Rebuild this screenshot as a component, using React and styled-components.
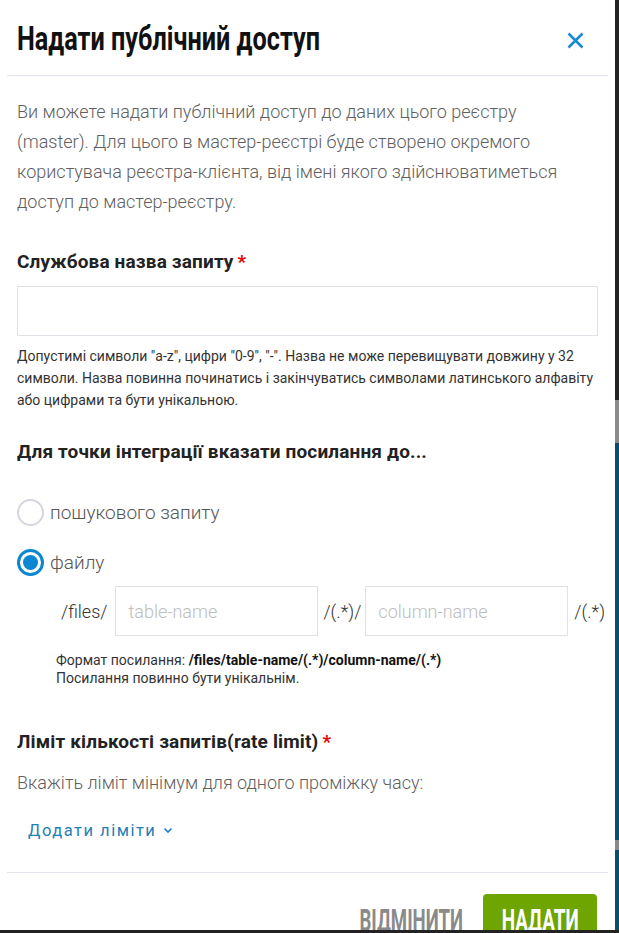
import React from "react";
import styled, { createGlobalStyle } from "styled-components";

const Global = createGlobalStyle`
  html, body {
    margin: 0;
    padding: 0;
    height: 933px;
    overflow: hidden;
  }
  body {
    background: linear-gradient(
      to bottom,
      #232323 0px,
      #232323 400px,
      #8a8a8a 400px,
      #8a8a8a 443px,
      #0b4d6c 443px,
      #0b4d6c 840px,
      #8a8a8a 840px,
      #8a8a8a 850px,
      #0b4d6c 850px,
      #0b4d6c 930px,
      #222 930px
    );
    font-family: Roboto, "Noto Sans", sans-serif;
  }
`;

const Modal = styled.div`
  width: 615px;
  height: 930px;
  background: #fff;
  overflow: hidden;
  display: flex;
  flex-direction: column;
`;

const Header = styled.header`
  margin: 0 7px;
  padding: 0 10px;
  height: 76px;
  box-sizing: border-box;
  border-bottom: 1px solid #e2e2ea;
  display: flex;
  align-items: center;
  justify-content: space-between;
  flex-shrink: 0;
`;

const Condensed = styled.span`
  display: inline-block;
  font-family: Roboto, "Noto Sans", sans-serif;
  font-weight: 700;
  transform: scaleX(${(p) => p.$sx || 0.765});
  transform-origin: ${(p) => p.$origin || "left"} center;
  white-space: nowrap;
`;

const Title = styled.h1`
  margin: 0;
  font-size: 33px;
  line-height: 38px;
  color: #111;
  font-weight: 700;
  padding-top: 3px;
`;

const CloseButton = styled.button`
  border: 0;
  background: none;
  padding: 0;
  margin: 6px 13px 0 0;
  width: 20px;
  height: 20px;
  display: flex;
  align-items: center;
  justify-content: center;
  cursor: pointer;
`;

const Body = styled.div`
  padding: 21px 17px 0;
  display: flex;
  flex-direction: column;
`;

const Intro = styled.p`
  margin: 0;
  max-width: 562px;
  font-size: 18px;
  line-height: 30px;
  font-weight: 300;
  color: #606060;
`;

const Label = styled.div`
  margin-top: ${(p) => p.$mt}px;
  font-size: 19px;
  line-height: 24px;
  font-weight: 700;
  letter-spacing: 0.15px;
  color: #222;
`;

const Req = styled.span`
  color: #e30000;
  margin-left: 4px;
`;

const TextInput = styled.input`
  display: block;
  box-sizing: border-box;
  width: ${(p) => p.$w || "100%"};
  height: 50px;
  border: 1px solid #e0e0e7;
  border-radius: 0;
  padding: 0 12px;
  font-family: Roboto, "Noto Sans", sans-serif;
  font-size: 18px;
  font-weight: 300;
  color: #333;
  outline: none;
  &::placeholder {
    color: #bdbdbd;
  }
`;

const NameInput = styled(TextInput)`
  margin-top: 12px;
  width: 581px;
`;

const Help = styled.div`
  margin-top: ${(p) => p.$mt}px;
  padding-left: ${(p) => p.$pl || 0}px;
  font-size: 14px;
  line-height: ${(p) => p.$lh || 22}px;
  color: #333;
  b {
    font-weight: 700;
    color: #111;
  }
`;

const RadioGroup = styled.div`
  margin-top: 33px;
  display: flex;
  flex-direction: column;
  gap: 20px;
`;

const RadioRow = styled.label`
  display: flex;
  align-items: center;
  gap: 6px;
  height: 30px;
  font-size: 19px;
  font-weight: 300;
  color: #555;
  cursor: pointer;
`;

const RadioCircle = styled.span`
  box-sizing: border-box;
  width: 27px;
  height: 27px;
  border-radius: 50%;
  border: ${(p) => (p.$on ? "3px solid #0a87d0" : "2px solid #d3d6e0")};
  display: flex;
  align-items: center;
  justify-content: center;
  &::after {
    content: "";
    display: ${(p) => (p.$on ? "block" : "none")};
    width: 15px;
    height: 15px;
    border-radius: 50%;
    background: #0a87d0;
  }
`;

const PathRow = styled.div`
  margin-top: 9px;
  padding-left: 44px;
  display: flex;
  align-items: center;
  font-size: 18px;
  font-weight: 300;
  color: #333;
`;

const Seg = styled.span`
  margin: 0 ${(p) => p.$mr || 0}px 0 ${(p) => p.$ml || 0}px;
`;

const Hint = styled.div`
  margin-top: 16px;
  font-size: 18px;
  line-height: 26px;
  font-weight: 300;
  color: #606060;
`;

const AddLink = styled.button`
  margin-top: 22px;
  align-self: flex-start;
  border: 0;
  background: none;
  padding: 0 0 0 11px;
  height: 24px;
  display: flex;
  align-items: center;
  gap: 7px;
  font-family: Roboto, "Noto Sans", sans-serif;
  font-size: 16.5px;
  letter-spacing: 1.5px;
  color: #1f80b6;
  cursor: pointer;
`;

const Footer = styled.footer`
  margin: 30px 7px 0;
  padding: 21px 11px 0 0;
  border-top: 1px solid #e2e2ea;
  display: flex;
  justify-content: flex-end;
  align-items: flex-start;
  gap: 20px;
`;

const Btn = styled.button`
  border: 0;
  border-radius: 4px;
  height: 50px;
  padding: 10px 0 0;
  width: ${(p) => p.$w}px;
  background: ${(p) => (p.$primary ? "#6ea500" : "transparent")};
  color: ${(p) => (p.$primary ? "#fff" : "#8a8a8a")};
  font-size: 31px;
  line-height: 34px;
  display: flex;
  align-items: flex-start;
  justify-content: center;
  overflow: visible;
  cursor: pointer;
`;

export default function App() {
  return (
    <>
      <Global />
      <Modal>
        <Header>
          <Title>
            <Condensed>Надати публічний доступ</Condensed>
          </Title>
          <CloseButton aria-label="Закрити">
            <svg width="17" height="17" viewBox="0 0 17 17">
              <path d="M1.5 1.5 L15.5 15.5 M15.5 1.5 L1.5 15.5" stroke="#1a8ad3" strokeWidth="2.6" strokeLinecap="butt" />
            </svg>
          </CloseButton>
        </Header>
        <Body>
          <Intro>
            Ви можете надати публічний доступ до даних цього реєстру (master). Для цього в мастер-реєстрі буде створено окремого користувача реєстра-клієнта, від імені якого здійснюватиметься доступ до мастер-реєстру.
          </Intro>
          <Label $mt={33}>
            Службова назва запиту<Req>*</Req>
          </Label>
          <NameInput />
          <Help $mt={9}>
            Допустимі символи "a-z", цифри "0-9", "-". Назва не може перевищувати довжину у 32
            <br />
            символи. Назва повинна починатись і закінчуватись символами латинського алфавіту або цифрами та бути унікальною.
          </Help>
          <Label $mt={29}>Для точки інтеграції вказати посилання до...</Label>
          <RadioGroup>
            <RadioRow>
              <RadioCircle />
              пошукового запиту
            </RadioRow>
            <RadioRow>
              <RadioCircle $on />
              файлу
            </RadioRow>
          </RadioGroup>
          <PathRow>
            <Seg $mr={8}>/files/</Seg>
            <TextInput $w="203px" placeholder="table-name" />
            <Seg $ml={5} $mr={4}>/(.*)/</Seg>
            <TextInput $w="203px" placeholder="column-name" />
            <Seg $ml={6}>/(.*)</Seg>
          </PathRow>
          <Help $mt={15} $pl={39} $lh={18}>
            Формат посилання: <b>/files/table-name/(.*)/column-name/(.*)</b>
            <br />
            Посилання повинно бути унікальнім.
          </Help>
          <Label $mt={43}>
            Ліміт кількості запитів(rate limit)<Req>*</Req>
          </Label>
          <Hint>Вкажіть ліміт мінімум для одного проміжку часу:</Hint>
          <AddLink>
            Додати ліміти
            <svg width="10" height="7" viewBox="0 0 10 7">
              <path d="M1.5 1.5 L5 5 L8.5 1.5" fill="none" stroke="#1f80b6" strokeWidth="1.6" />
            </svg>
          </AddLink>
        </Body>
        <Footer>
          <Btn $w={104}>
            <Condensed $origin="center" $sx={0.6}>ВІДМІНИТИ</Condensed>
          </Btn>
          <Btn $w={114} $primary>
            <Condensed $origin="center" $sx={0.61}>НАДАТИ</Condensed>
          </Btn>
        </Footer>
      </Modal>
    </>
  );
}
